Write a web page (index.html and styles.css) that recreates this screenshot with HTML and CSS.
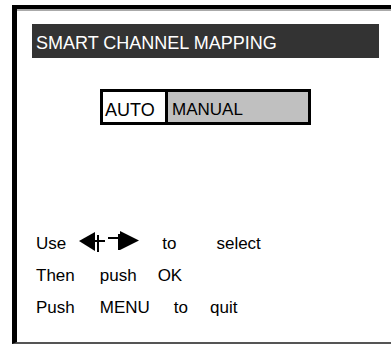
FILE: index.html
```html
<!DOCTYPE html>
<html>
<head>
<meta charset="utf-8">
<link rel="stylesheet" href="styles.css">
</head>
<body>
<div class="frame">
  <div class="title">SMART CHANNEL MAPPING</div>
  <div class="toggle">
    <div class="opt auto">AUTO</div>
    <div class="opt manual">MANUAL</div>
  </div>
  <div class="help">
    <div class="row">
      <span>Use</span>
      <svg class="arrows" width="63" height="23" viewBox="0 0 63 23">
        <polygon points="2,11 18,2 18,21" fill="#000"/>
        <rect x="18" y="10" width="10" height="2" fill="#000"/>
        <rect x="20" y="5" width="2" height="17" fill="#000"/>
        <rect x="31" y="7" width="12" height="2" fill="#000"/>
        <rect x="41" y="4" width="2" height="16" fill="#000"/>
        <polygon points="43,1 43,20 62,10.5" fill="#000"/>
      </svg>
      <span class="g22">to</span>
      <span class="g40">select</span>
    </div>
    <div class="row">
      <span>Then</span>
      <span class="g25">push</span>
      <span class="g21">OK</span>
    </div>
    <div class="row">
      <span>Push</span>
      <span class="g25">MENU</span>
      <span class="g24">to</span>
      <span class="g22">quit</span>
    </div>
  </div>
</div>
</body>
</html>
```
FILE: styles.css
```css
html, body {
  margin: 0;
  padding: 0;
  background: #fff;
  overflow: hidden;
  width: 391px;
  height: 344px;
}
body {
  font-family: "Liberation Sans", Arial, sans-serif;
  font-size: 17px;
  color: #000;
}
.frame {
  box-sizing: border-box;
  margin: 5px 0 0 12px;
  width: 379px;
  height: 339px;
  border-top: 4px solid #000;
  border-left: 5px solid #000;
  border-bottom: 2px solid #555;
  box-shadow: inset 0 2px 0 #aaa;
  padding-top: 15px;
  display: flex;
  flex-direction: column;
}
.title {
  box-sizing: border-box;
  margin-left: 15px;
  width: 347px;
  height: 34px;
  background: #333;
  color: #fff;
  font-size: 18px;
  padding: 9px 0 0 4px;
  line-height: 20px;
}
.toggle {
  box-sizing: border-box;
  margin: 31px 0 0 83px;
  width: 211px;
  height: 36px;
  border: 3px solid #000;
  display: flex;
}
.opt {
  line-height: 30px;
  padding-top: 3px;
  box-sizing: border-box;
}
.auto {
  width: 65px;
  padding-left: 2px;
  border-right: 3px solid #000;
  background: #fff;
  font-size: 18px;
}
.manual {
  flex: 1;
  padding-left: 4px;
  background: #c0c0c0;
}
.help {
  margin: 103px 0 0 19px;
}
.row {
  display: flex;
  align-items: center;
  height: 32px;
  line-height: 32px;
}
.arrows {
  margin-left: 11px;
  margin-top: -5px;
}
.g21 { margin-left: 21px; }
.g22 { margin-left: 22px; }
.g24 { margin-left: 24px; }
.g25 { margin-left: 25px; }
.g40 { margin-left: 40px; }
```
